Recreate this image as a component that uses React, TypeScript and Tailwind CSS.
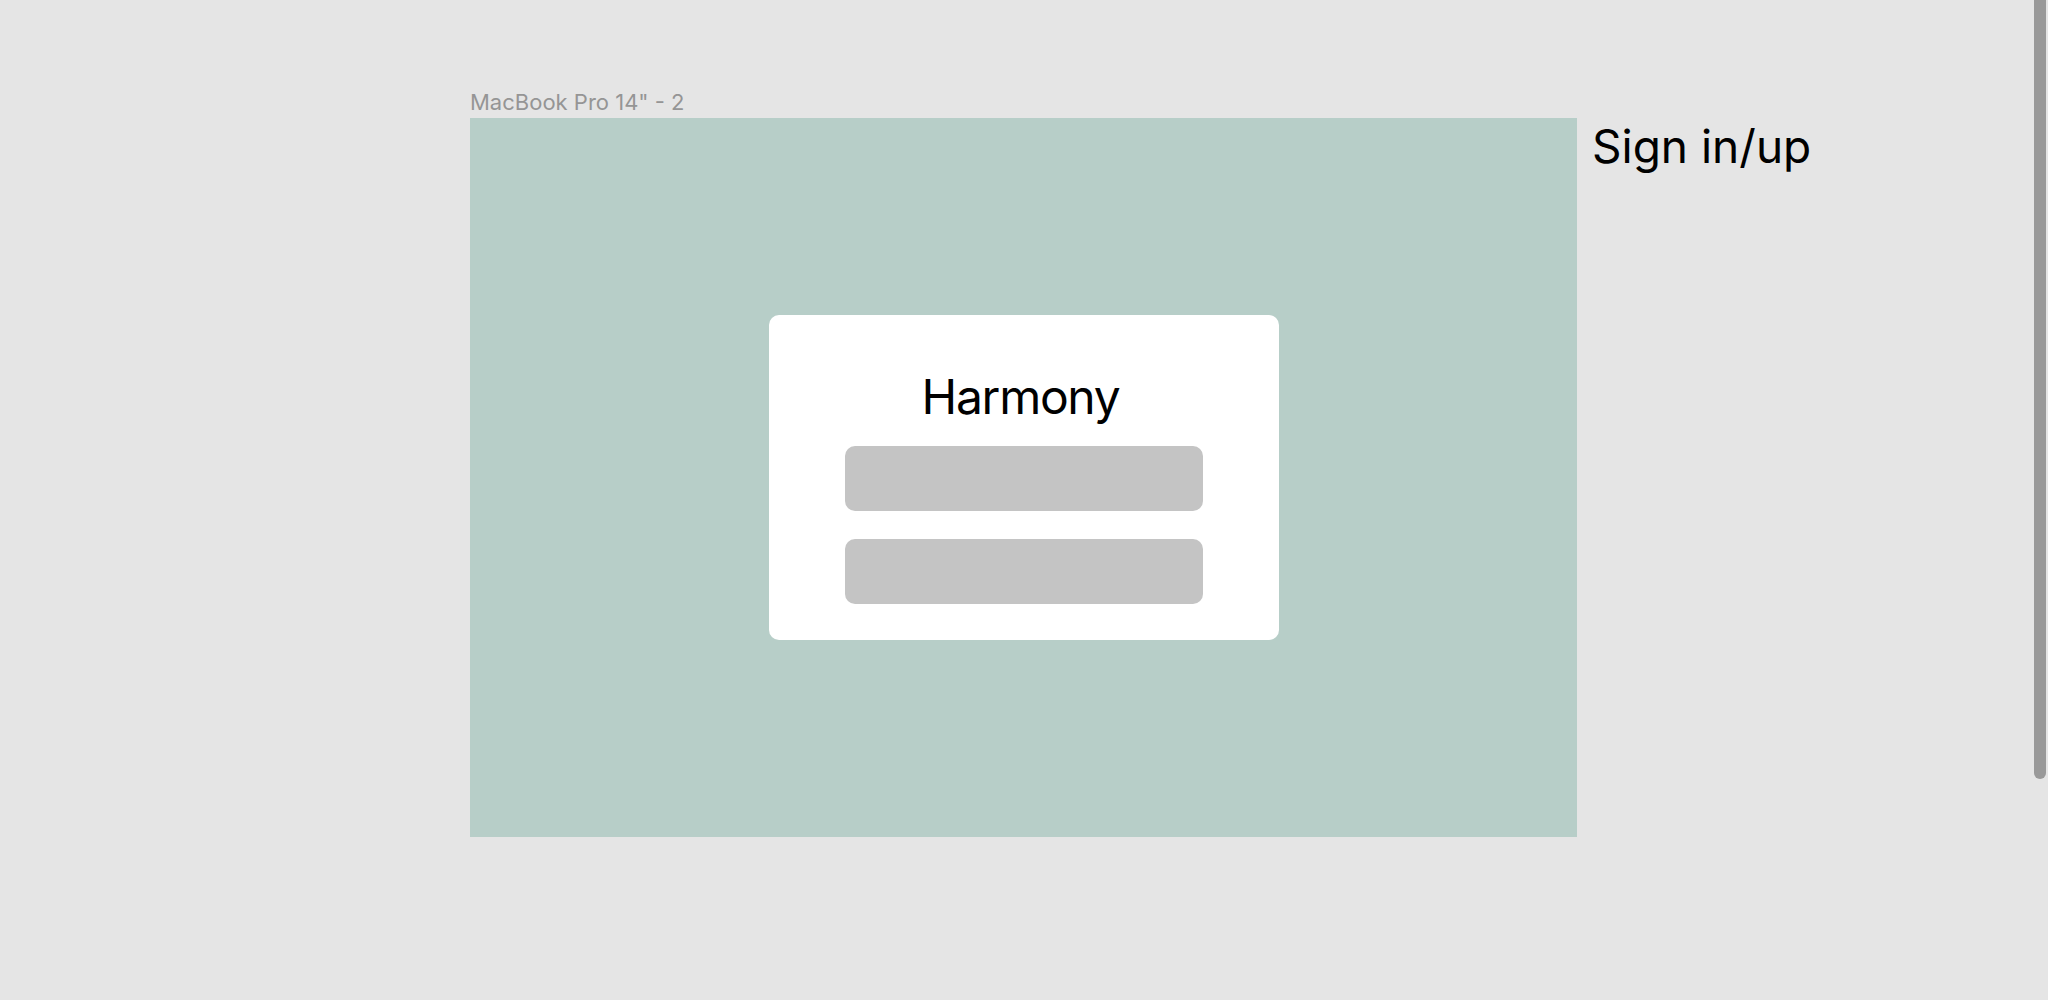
export default function App() {
  return (
    <div
      className="relative w-[2048px] h-[1000px] overflow-hidden bg-[#e5e5e5]"
      style={{ fontFamily: "Inter, 'Noto Sans', sans-serif" }}
    >
      <div className="flex items-start pl-[470px] pt-[91px]">
        {/* Frame */}
        <div className="flex flex-col">
          <div className="text-[22px] leading-[22px] text-[#959595] mb-[5px]">
            MacBook Pro 14&quot; - 2
          </div>
          <div className="w-[1107px] h-[719px] bg-[#b7cec8] flex items-center justify-center">
            <div className="w-[510px] h-[325px] bg-white rounded-[10px] px-[76px] pt-[58px] flex flex-col items-center">
              <h1 className="text-[48px] leading-[48px] tracking-[-1.3px] pr-[6px] text-black">
                Harmony
              </h1>
              <div className="mt-[25px] w-full h-[65px] rounded-[10px] bg-[#c4c4c4]" />
              <div className="mt-[28px] w-full h-[65px] rounded-[10px] bg-[#c4c4c4]" />
            </div>
          </div>
        </div>
        <div className="ml-[15px] mt-[32px] text-[46px] leading-[46px] text-black">
          Sign in/up
        </div>
      </div>

      {/* Scrollbar */}
      <div className="absolute top-0 right-[2px] w-[12px] h-[779px] rounded-b-full bg-[#999999]" />
    </div>
  );
}
